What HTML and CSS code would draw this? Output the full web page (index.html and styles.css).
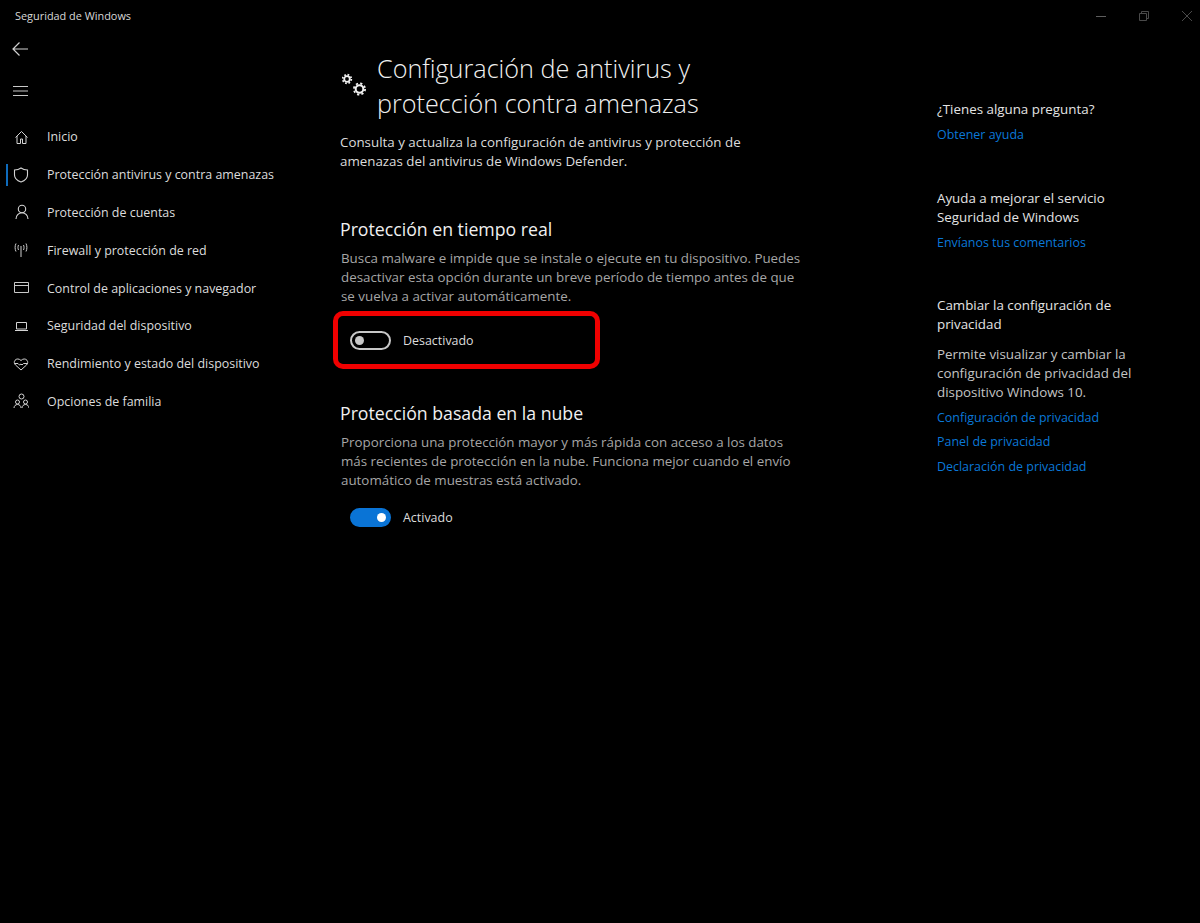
FILE: index.html
```html
<!DOCTYPE html>
<html lang="es">
<head>
  <meta charset="UTF-8">
  <title>Seguridad de Windows</title>
  <link rel="stylesheet" href="styles.css">
</head>
<body>
  <header class="titlebar">
    <span class="app-name">Seguridad de Windows</span>
    <div class="window-controls">
      <svg width="12" height="12" viewBox="0 0 12 12"><path d="M1 6.5h10" stroke="#5e5e5e" fill="none"/></svg>
      <svg width="12" height="12" viewBox="0 0 12 12"><path d="M1.500 3.500h7v7h-7zM3.500 3.500v-2h7v7h-2" stroke="#4a4a4a" fill="none"/></svg>
      <svg width="12" height="12" viewBox="0 0 12 12"><path d="M1 1l10 10M11 1L1 11" stroke="#4a4a4a" fill="none"/></svg>
    </div>
  </header>

  <div class="app">
    <nav class="sidebar">
      <div class="nav-top">
        <svg class="icon" width="18" height="18" viewBox="0 0 18 18"><path d="M16 9H1M7.500 2.500L1 9l6.500 6.500" stroke="#d0d0d0" fill="none" stroke-width="1.200"/></svg>
      </div>
      <div class="nav-burger">
        <svg class="icon" width="18" height="18" viewBox="0 0 18 18"><path d="M1 4.500h15M1 9h15M1 13.500h15" stroke="#c8c8c8" fill="none"/></svg>
      </div>
      <ul class="nav-list">
        <li class="nav-item">
          <svg width="16" height="16" viewBox="0 0 16 16"><path d="M2.500 8.500L8.500 2.500l6 6M4 7v7.500h3.500V10h2v4.500H13V7" stroke="#d4d4d4" fill="none"/></svg>
          <span>Inicio</span>
        </li>
        <li class="nav-item active">
          <svg width="16" height="16" viewBox="0 0 16 16"><path d="M8 1c2 1.500 4 2 6.500 2v5c0 3.500-3 5.800-6.500 7C4.500 13.800 1.500 11.500 1.500 8V3C4 3 6 2.500 8 1z" stroke="#d4d4d4" fill="none" stroke-width="1.100"/></svg>
          <span>Protección antivirus y contra amenazas</span>
        </li>
        <li class="nav-item">
          <svg width="16" height="16" viewBox="0 0 16 16"><circle cx="9" cy="5" r="3.700" stroke="#d4d4d4" fill="none" stroke-width="1.100"/><path d="M3 15c0-3.500 2.500-6.300 6-6.300s6 2.800 6 6.300" stroke="#d4d4d4" fill="none" stroke-width="1.100"/></svg>
          <span>Protección de cuentas</span>
        </li>
        <li class="nav-item">
          <svg width="16" height="16" viewBox="0 0 16 16"><path d="M8 4v11M5.500 3C4.800 4.500 4.800 6.500 5.500 8M10.500 3c.7 1.500.7 3.500 0 5M3 1.500C1.800 4 1.800 7 3 9.500M13 1.500c1.200 2.500 1.200 5.500 0 8" stroke="#cfcfcf" fill="none"/></svg>
          <span>Firewall y protección de red</span>
        </li>
        <li class="nav-item">
          <svg width="16" height="16" viewBox="0 0 16 16"><path d="M1.500 2.500h14v10h-14zM1.500 5.500h14" stroke="#c8c8c8" fill="none"/></svg>
          <span>Control de aplicaciones y navegador</span>
        </li>
        <li class="nav-item">
          <svg width="16" height="16" viewBox="0 0 16 16"><path d="M3.500 4.500h10v6.500h-10zM2 12.500h13" stroke="#d4d4d4" fill="none"/></svg>
          <span>Seguridad del dispositivo</span>
        </li>
        <li class="nav-item">
          <svg width="16" height="16" viewBox="0 0 16 16"><path d="M2.500 9C1 7.500 1 5.500 2 4.300 3.500 2.500 6 2.500 8 4.500c2-2 4.500-2 6 -.2 1 1.200 1 3.200-.5 4.700L8 14zM1.500 7.500H5l1.500 1.500L8 8l1 1 1.500-1.500h4" stroke="#d4d4d4" fill="none"/></svg>
          <span>Rendimiento y estado del dispositivo</span>
        </li>
        <li class="nav-item">
          <svg width="16" height="16" viewBox="0 0 16 16"><circle cx="8.500" cy="3.500" r="2.500" stroke="#d4d4d4" fill="none"/><circle cx="4.500" cy="9" r="2" stroke="#d4d4d4" fill="none"/><circle cx="12.500" cy="9" r="2" stroke="#d4d4d4" fill="none"/><path d="M1 15c0-2 1.500-3.500 3.500-3.500S8 13 8 15M9 15c0-2 1.500-3.500 3.500-3.500S16 13 16 15" stroke="#d4d4d4" fill="none"/></svg>
          <span>Opciones de familia</span>
        </li>
      </ul>
    </nav>

    <main class="content">
      <div class="page-title">
        <svg class="gears" width="26" height="24" viewBox="0 0 26 24">
          <circle cx="5" cy="6" r="2.800" stroke="#f0f0f0" stroke-width="1.800" fill="none"/>
          <circle cx="5" cy="6" r="4.300" stroke="#f0f0f0" stroke-width="1.800" stroke-dasharray="1.690 1.690" fill="none"/>
          <circle cx="17.500" cy="16" r="3.800" stroke="#f0f0f0" stroke-width="2" fill="none"/>
          <circle cx="17.500" cy="16" r="5.600" stroke="#f0f0f0" stroke-width="1.800" stroke-dasharray="2.200 2.200" fill="none"/>
        </svg>
        <h1>Configuración de antivirus y protección contra amenazas</h1>
      </div>
      <p class="intro">Consulta y actualiza la configuración de antivirus y protección de amenazas del antivirus de Windows Defender.</p>

      <section class="setting first">
        <h2>Protección en tiempo real</h2>
        <p>Busca malware e impide que se instale o ejecute en tu dispositivo. Puedes<br>desactivar esta opción durante un breve período de tiempo antes de que<br>se vuelva a activar automáticamente.</p>
        <div class="toggle-row marked">
          <span class="toggle"></span>
          <span class="toggle-label">Desactivado</span>
        </div>
      </section>

      <section class="setting">
        <h2>Protección basada en la nube</h2>
        <p>Proporciona una protección mayor y más rápida con acceso a los datos<br>más recientes de protección en la nube. Funciona mejor cuando el envío<br>automático de muestras está activado.</p>
        <div class="toggle-row">
          <span class="toggle on"></span>
          <span class="toggle-label">Activado</span>
        </div>
      </section>
    </main>

    <aside class="side-info">
      <div class="info-block">
        <h3>¿Tienes alguna pregunta?</h3>
        <a class="first-link" href="#">Obtener ayuda</a>
      </div>
      <div class="info-block">
        <h3>Ayuda a mejorar el servicio Seguridad de Windows</h3>
        <a class="first-link" href="#">Envíanos tus comentarios</a>
      </div>
      <div class="info-block">
        <h3>Cambiar la configuración de privacidad</h3>
        <p>Permite visualizar y cambiar la configuración de privacidad del dispositivo Windows 10.</p>
        <a href="#">Configuración de privacidad</a>
        <a href="#">Panel de privacidad</a>
        <a href="#">Declaración de privacidad</a>
      </div>
    </aside>
  </div>
</body>
</html>
```

FILE: styles.css
```css
* {
  box-sizing: border-box;
}

body {
  margin: 0;
  height: 923px;
  overflow: hidden;
  background: #000;
  color: #e4e4e4;
  font-family: "Open Sans", "Noto Sans", sans-serif;
  font-size: 12.45px;
}

.titlebar {
  height: 32px;
  display: flex;
  align-items: center;
  justify-content: space-between;
  padding: 0 7px 0 15px;
}

.app-name {
  font-size: 10.9px;
  color: #d8d8d8;
  margin-bottom: 2px;
}

.window-controls {
  display: flex;
  gap: 31px;
}

.window-controls svg {
  display: block;
}

.app {
  display: flex;
}

.sidebar {
  width: 340px;
  flex: none;
}

.nav-top {
  height: 34px;
  padding: 8px 0 0 12px;
}

.nav-burger {
  height: 52px;
  padding: 16px 0 0 12px;
}

.icon {
  display: block;
}

.nav-list {
  list-style: none;
  margin: 0;
  padding: 0;
}

.nav-item {
  height: 37.8px;
  display: flex;
  align-items: center;
  gap: 18px;
  padding-left: 13px;
  position: relative;
  color: #dcdcdc;
}

.nav-item svg {
  flex: none;
}

.nav-item.active::before {
  content: "";
  position: absolute;
  left: 6px;
  top: 8px;
  width: 2px;
  height: 22px;
  background: #0f6cbd;
}

.content {
  width: 597px;
  flex: none;
}

.page-title {
  display: flex;
  align-items: center;
  gap: 9px;
  padding-left: 2px;
  margin-top: 19px;
}

.gears {
  flex: none;
  margin-bottom: 2px;
}

h1 {
  margin: 0;
  width: 340px;
  font-size: 25.2px;
  font-weight: 300;
  line-height: 35px;
  color: #f0f0f0;
}

.intro {
  margin: 12px 0 0;
  width: 420px;
  font-size: 13.35px;
  line-height: 19px;
  color: #dcdcdc;
}

.setting {
  margin-top: 32px;
}

.setting.first {
  margin-top: 46px;
}

h2 {
  margin: 0;
  font-size: 17.7px;
  font-weight: 400;
  line-height: 24px;
  color: #f0f0f0;
}

.setting p {
  margin: 8px 0 0 1px;
  font-size: 13.35px;
  line-height: 19px;
  white-space: nowrap;
  color: #a6a6a6;
}

.toggle-row {
  display: flex;
  align-items: center;
  gap: 12px;
  height: 19px;
  margin: 18px 0 0 10px;
}

.toggle-row.marked {
  width: 267px;
  height: 58px;
  margin: 5px 0 0 -7px;
  padding-left: 12px;
  border: 5px solid #f00000;
  border-radius: 10px;
}

.toggle {
  width: 41px;
  height: 19px;
  border: 2px solid #c8c8c8;
  border-radius: 10px;
  display: flex;
  align-items: center;
  padding: 0 3px;
}

.toggle::after {
  content: "";
  width: 9px;
  height: 9px;
  border-radius: 50%;
  background: #c8c8c8;
}

.toggle.on {
  background: #0a74d6;
  border-color: #0a74d6;
  justify-content: flex-end;
}

.toggle.on::after {
  background: #fff;
}

.toggle-label {
  color: #dcdcdc;
}

.side-info {
  flex: 1;
  margin-top: 68px;
  padding-right: 40px;
}

.info-block {
  margin-bottom: 44.5px;
}

.info-block h3 {
  margin: 0;
  font-size: 13.35px;
  font-weight: 400;
  line-height: 19px;
  color: #e4e4e4;
}

.info-block p {
  margin: 11px 0 0;
  font-size: 13.35px;
  line-height: 19px;
  color: #c4c4c4;
}

.info-block a {
  display: block;
  margin-top: 5.5px;
  line-height: 19px;
  color: #0a78d8;
  text-decoration: none;
}

.info-block a.first-link {
  margin-top: 6px;
}
```
